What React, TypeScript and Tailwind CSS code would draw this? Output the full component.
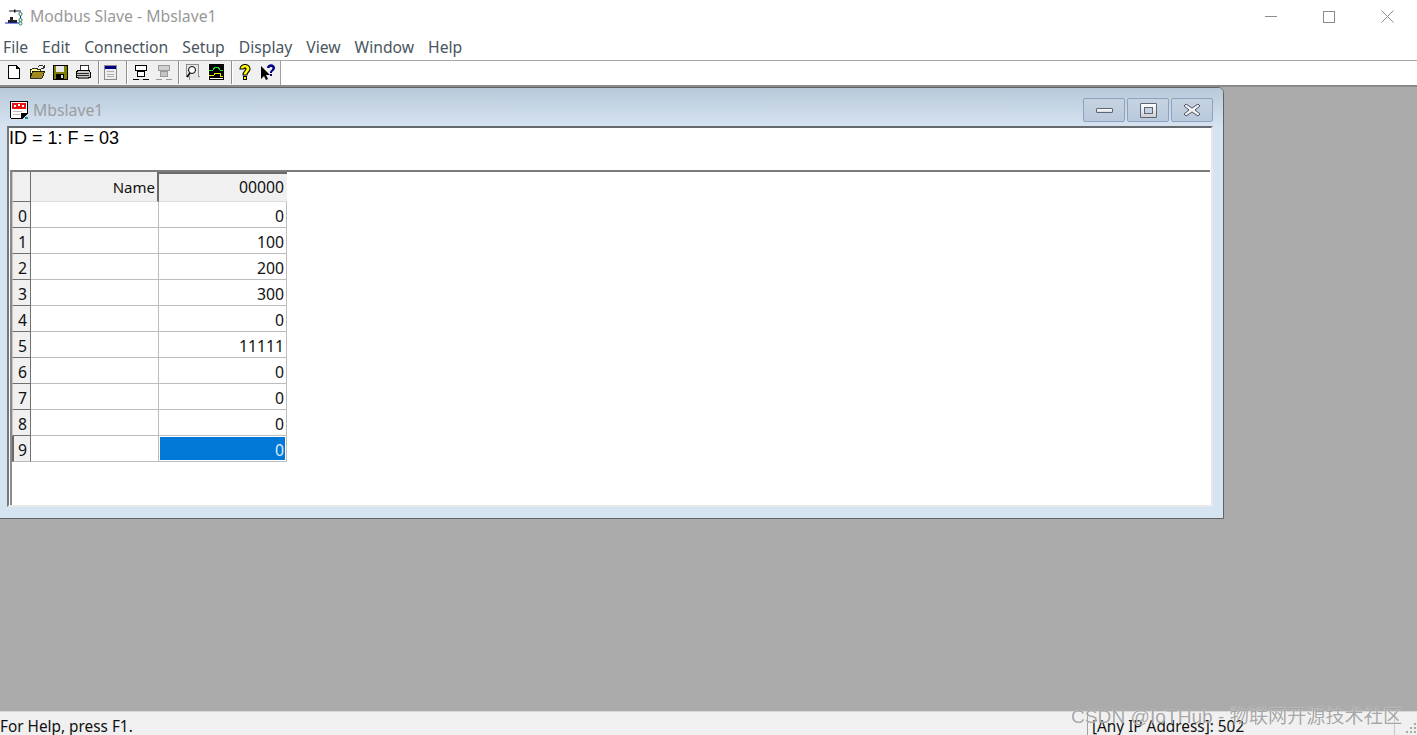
import React from "react";

const ui = { fontFamily: '"Noto Sans", "Open Sans", sans-serif' };

function I({ w = 16, children }: { w?: number; children: React.ReactNode }) {
  return (
    <svg width={w} height="16" viewBox={`0 0 ${w} 16`} shapeRendering="crispEdges" className="shrink-0">
      {children}
    </svg>
  );
}

const NewIcon = () => (
  <I><path d="M3 1.5h8l3 3v10H3z" fill="#fff" stroke="#000" /><path d="M11 1.5v3h3" fill="none" stroke="#000" /></I>
);
const OpenIcon = () => (
  <I w={17}>
    <path d="M1 14V5h2l1-1h4v1h3v2H4l-3 7z" fill="#ffff99" stroke="#000" strokeWidth="0.8" />
    <path d="M1 14l3-7h12l-3 7z" fill="#a08a20" stroke="#000" strokeWidth="0.8" />
    <path d="M9 3c1-2 3-2 5-1l1 2M15 1v3h-3" fill="none" stroke="#000" strokeWidth="0.8" />
  </I>
);
const SaveIcon = () => (
  <I>
    <rect x="1" y="1" width="14" height="14" fill="#808000" stroke="#000" />
    <rect x="4" y="1.5" width="8" height="6" fill="#e8e8e8" />
    <rect x="4" y="10" width="8" height="5" fill="#000" />
    <rect x="9" y="11" width="2" height="3" fill="#ddd" />
  </I>
);
const PrintIcon = () => (
  <I>
    <path d="M5 1h8v5H5z" fill="#fff" stroke="#000" strokeWidth="0.8" />
    <path d="M1 8l3-2h10l1 2v5H1z" fill="#c8c8c8" stroke="#000" />
    <path d="M2 9h12M2 11h12" stroke="#000" strokeWidth="0.8" />
    <path d="M3 13h10v1.5H3z" fill="#fff" stroke="#000" strokeWidth="0.6" />
  </I>
);
const WinIcon = () => (
  <I>
    <rect x="2.5" y="1.5" width="12" height="14" fill="#ececec" stroke="#8a8a8a" />
    <rect x="3" y="2" width="11" height="3" fill="#000080" />
    <path d="M5 7.5h7M5 10h7M5 12.5h7" stroke="#b0b0b0" />
  </I>
);
const NetIcon = ({ off }: { off?: boolean }) => {
  const c = off ? "#9a9a9a" : "#000";
  return (
    <I>
      <rect x="2.5" y="1.5" width="11" height="5" fill={off ? "#d0d0d0" : "#fff"} stroke={c} />
      <rect x="4.5" y="7.5" width="7" height="5" fill={off ? "#c4c4c4" : "#fff"} stroke={c} />
      <path d="M0 15h6M10 15h6" stroke={c} />
      {!off && <path d="M6 15h4" stroke="#d0d0d0" />}
    </I>
  );
};
const ScrollIcon = () => (
  <I>
    <path d="M2 0h12v12h2v4H5v-4H2z" fill="#e6e6e6" stroke="#777" strokeWidth="0.8" />
    <circle cx="8" cy="6" r="3.5" fill="#fff" stroke="#000" shapeRendering="auto" />
    <path d="M6 9l-3 4" stroke="#000" strokeWidth="1.6" shapeRendering="auto" />
  </I>
);
const ChartIcon = () => (
  <I>
    <rect x="0" y="0" width="16" height="16" fill="#000" />
    <path d="M1 6h4l2-3h3l2 3h3" fill="none" stroke="#22dd22" />
    <path d="M1 11h5l1-2h5v3h3" fill="none" stroke="#e8e800" />
    <path d="M0 0v16M2 14.5h13" stroke="#fff" />
  </I>
);
const HelpIcon = () => (
  <I>
    <path d="M3 5c0-6 10-6 10 0 0 3-3 3-3 6H6c0-4 3-4 3-6 0-1.500-2-1.500-2 0z" fill="#ffff00" stroke="#000" strokeWidth="1.1" shapeRendering="auto" />
    <rect x="6.500" y="12.500" width="3" height="3" fill="#ffff00" stroke="#000" />
  </I>
);
const WhatIcon = () => (
  <I>
    <path d="M1 2v13l3-3 2 4 2-1-2-4h4z" fill="#000" shapeRendering="auto" />
    <path d="M7 4c0-5 8-5 8 0 0 2.500-3 3-3 5h-2c0-3 2.500-3 2.500-5 0-1.500-3-1.500-3 0z" fill="#000080" shapeRendering="auto" />
    <rect x="10" y="10" width="2" height="2" fill="#000080" />
  </I>
);
const Sep = () => <div className="w-px h-[23px] bg-[#8f8f8f] border-r border-white box-content" />;

const AppIcon = () => (
  <svg width="18" height="18" viewBox="0 0 18 18" className="shrink-0">
    <path d="M4 3h12" stroke="#1a1a3a" fill="none" />
    <rect x="9" y="1.500" width="1.500" height="3" fill="#111" />
    <circle cx="15.500" cy="6" r="1.600" fill="#fff" stroke="#2a7a5a" />
    <path d="M15.500 8v2" stroke="#1020c0" />
    <circle cx="15.500" cy="12" r="1.600" fill="#fff" stroke="#2a7a5a" />
    <path d="M5 9h3v3H5z" fill="#222" />
    <path d="M3 12h9v3H3z" fill="#222" />
    <path d="M0 15h14" stroke="#1020c0" />
    <circle cx="15.500" cy="15.500" r="1.500" fill="#fff" stroke="#2a7a5a" />
  </svg>
);

const DocIcon = () => (
  <svg width="20" height="20" viewBox="0 0 20 20" className="shrink-0" shapeRendering="crispEdges">
    <path d="M1.500 1.500h17v12l-5 5h-11l-1-1z" fill="#fff" stroke="#000" strokeWidth="1.400" />
    <rect x="3" y="3" width="14" height="6" fill="#ee1111" />
    <rect x="5" y="5" width="2" height="2" fill="#fff" />
    <rect x="9" y="4" width="2" height="2" fill="#fff" />
    <rect x="13" y="5" width="2" height="2" fill="#fff" />
    <path d="M4 11h9M4 14h7" stroke="#bbb" />
    <path d="M13 19v-5h5" fill="#000" stroke="#000" strokeWidth="2" />
    <rect x="16" y="17" width="3" height="2" fill="#1f8f8f" />
  </svg>
);

const rows = ["0", "100", "200", "300", "0", "11111", "0", "0", "0", "0"];

function MdiBtn({ children }: { children: React.ReactNode }) {
  return (
    <div className="w-[42px] h-[24px] rounded-[2px] border border-[#8da3bf] bg-gradient-to-b from-[#c6d3e2] to-[#b9c9dc] flex items-center justify-center">
      {children}
    </div>
  );
}

export default function App() {
  return (
    <div className="w-[1417px] h-[735px] overflow-hidden flex flex-col bg-white text-black relative" style={ui}>
      {/* Title bar */}
      <div className="h-[33px] flex items-center shrink-0 pl-[5px]">
        <AppIcon />
        <span className="ml-[7px] text-[15.75px] text-[#999999]">Modbus Slave - Mbslave1</span>
        <div className="ml-auto flex items-center text-[#8c8c8c]">
          <div className="w-[58px] flex justify-center">
            <div className="w-[12px] h-px bg-[#8c8c8c]" />
          </div>
          <div className="w-[58px] flex justify-center">
            <div className="w-[12px] h-[12px] border border-[#8c8c8c]" />
          </div>
          <div className="w-[59px] flex justify-center">
            <svg width="13" height="13" viewBox="0 0 13 13"><path d="M0.5 0.5l12 12M12.5 0.5l-12 12" stroke="#8c8c8c" /></svg>
          </div>
        </div>
      </div>
      {/* Menu */}
      <div className="h-[27px] flex items-center shrink-0 text-[15.7px] text-[#4a5560] pl-[3px] gap-[14px] pt-[3px]">
        {["File", "Edit", "Connection", "Setup", "Display", "View", "Window", "Help"].map((m) => (
          <span key={m}>{m}</span>
        ))}
      </div>
      {/* Toolbar */}
      <div className="h-[27px] shrink-0 border-t border-t-[#a8a8a8] border-b-2 border-b-[#8a8a8a] bg-white">
        <div className="h-full w-[281px] bg-[#f0f0f0] border-r border-r-[#a0a0a0] flex items-center pl-[5px] pb-[2px]">
          <NewIcon />
          <div className="ml-[8px]"><OpenIcon /></div>
          <div className="ml-[6px]"><SaveIcon /></div>
          <div className="ml-[7px]"><PrintIcon /></div>
          <div className="ml-[7px]"><Sep /></div>
          <div className="ml-[2px]"><WinIcon /></div>
          <div className="ml-[8px]"><Sep /></div>
          <div className="ml-[5px]"><NetIcon /></div>
          <div className="ml-[7px]"><NetIcon off /></div>
          <div className="ml-[6px]"><Sep /></div>
          <div className="ml-[4px]"><ScrollIcon /></div>
          <div className="ml-[8px]"><ChartIcon /></div>
          <div className="ml-[7px]"><Sep /></div>
          <div className="ml-[4px]"><HelpIcon /></div>
          <div className="ml-[7px]"><WhatIcon /></div>
        </div>
      </div>
      {/* Workspace */}
      <div className="flex-1 bg-[#ababab] relative overflow-hidden">
        {/* MDI child window */}
        <div className="absolute left-[-2px] top-0 w-[1226px] h-[432px] rounded-tr-[6px] border border-[#5f6368] bg-[#d6e3f0] flex flex-col">
          <div className="h-[38px] shrink-0 flex items-center pl-[10px] pt-[6px] bg-gradient-to-b from-[#b9c9d9] to-[#d5e3f1] rounded-tr-[5px]">
            <DocIcon />
            <span className="ml-[4px] mt-px text-[15.75px] text-[#9a9ea3]">Mbslave1</span>
            <div className="ml-auto flex gap-[2px] pr-[10px]">
              <MdiBtn><div className="w-[17px] h-[5px] rounded-[1px] border border-[#5b6675] bg-gradient-to-b from-white to-[#d8d8d8]" /></MdiBtn>
              <MdiBtn><div className="w-[17px] h-[15px] rounded-[1px] border-[1px] border-[#5b6675] bg-gradient-to-b from-white to-[#d0d0d0] flex items-center justify-center"><div className="w-[9px] h-[7px] border border-[#5b6675] bg-[#c3d1e2]" /></div></MdiBtn>
              <MdiBtn>
                <svg width="18" height="16" viewBox="0 0 18 16">
                  <path d="M3 2l6 4 6-4 2 2-5 4 5 4-2 2-6-4-6 4-2-2 5-4-5-4z" fill="#f0f0f0" stroke="#4a5565" />
                </svg>
              </MdiBtn>
            </div>
          </div>
          {/* Client */}
          <div className="ml-[8px] mr-[10px] h-[381px] shrink-0 bg-white border-t-2 border-t-[#666a6e] border-l-2 border-l-[#777] border-r-2 border-r-[#e8e8e8] border-b-2 border-b-[#e8e8e8] flex flex-col">
            <div className="h-[42px] shrink-0 text-[18px] leading-[20px] text-black" style={{ fontFamily: '"Liberation Sans", sans-serif' }}>
              ID = 1: F = 03
            </div>
            <div className="ml-[1px] mr-[1px] border-t-2 border-t-[#7c7c7c] border-l-2 border-l-[#8a8a8a] flex-1">
              <div className="w-[276px] text-[15.75px] text-[#111] leading-[28px]">
                <div className="flex h-[30px]">
                  <div className="w-[19px] bg-[#f0f0f0] border-r border-r-[#707070] border-b border-b-[#707070] border-l border-l-[#c8c8c8]" />
                  <div className="w-[128px] bg-[#f0f0f0] border-r-2 border-r-[#6a6a6a] border-b border-b-[#dcdcdc] text-right pr-[2px] leading-[30px] text-[15px]">Name</div>
                  <div className="w-[128px] bg-[#f0f0f0] border-t-2 border-t-[#6a6a6a] border-b border-b-[#dcdcdc] text-right pr-[3px] leading-[27px]">00000</div>
                </div>
                {rows.map((v, i) => (
                  <div key={i} className="flex h-[26px]">
                    <div className={`w-[19px] bg-[#f0f0f0] border-r border-r-[#707070] border-b text-right pr-[3px] ${i === 9 ? "border-l-2 border-l-[#6a6a6a] border-b-[#bbbbbb]" : "border-l border-l-[#c8c8c8] border-b-[#707070]"}`}>{i}</div>
                    <div className="w-[128px] border-r border-r-[#bdbdbd] border-b border-b-[#bdbdbd]" />
                    <div className="w-[128px] border-r border-r-[#bdbdbd] border-b border-b-[#bdbdbd] text-right">
                      {i === 9 ? (
                        <div className="h-[23px] mx-px mt-px bg-[#0078d7] text-[#dfeefa] pr-[1px] leading-[26px]">0</div>
                      ) : (
                        <div className="pr-[2px]">{v}</div>
                      )}
                    </div>
                  </div>
                ))}
              </div>
            </div>
          </div>
        </div>
      </div>
      {/* Status bar */}
      <div className="h-[24px] shrink-0 bg-[#f0f0f0] border-t border-t-[#d8d8d8] relative flex items-start text-[15.35px] text-[#111] leading-[26px] overflow-hidden">
        <span className="mt-px">For Help, press F1.</span>
        <div className="ml-auto w-[308px] h-full border-l border-l-[#a0a0a0] border-r border-r-[#c8c8c8] mr-[22px] pl-[4px]">
          <span className="block mt-px">[Any IP Address]: 502</span>
        </div>
        <svg width="12" height="12" viewBox="0 0 12 12" className="absolute right-0 bottom-0" shapeRendering="crispEdges">
          <path d="M9 0h2v2H9zM5 4h2v2H5zM9 4h2v2H9zM1 8h2v2H1zM5 8h2v2H5zM9 8h2v2H9z" fill="#a8a8a8" />
        </svg>
      </div>
      {/* Watermark */}
      <div
        className="absolute left-[1071px] top-[703px] text-[19.15px] leading-[27px] text-[#8f8f8f]/80 whitespace-nowrap [text-shadow:0_0_1px_#ffffff]"
        style={{ fontFamily: '"Liberation Sans", "Noto Sans CJK SC", sans-serif' }}
      >
        CSDN @IoTHub - 物联网开源技术社区
      </div>
    </div>
  );
}
